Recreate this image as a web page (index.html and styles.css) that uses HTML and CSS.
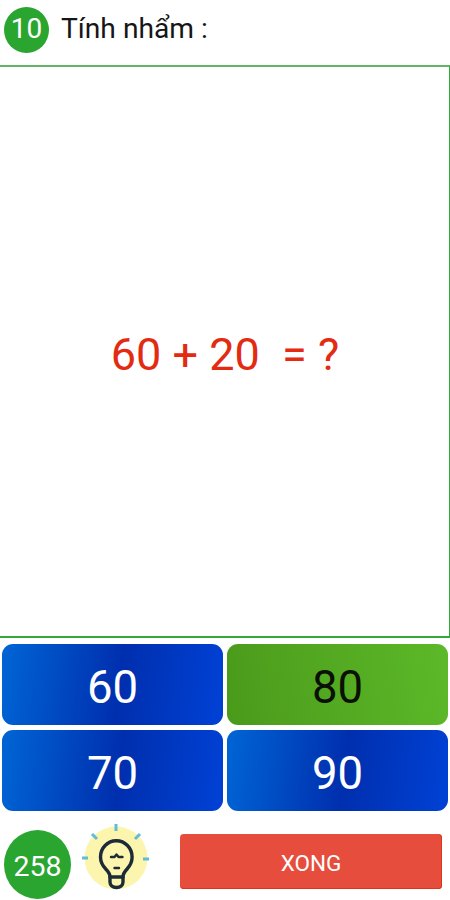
FILE: index.html
```html
<!DOCTYPE html>
<html lang="vi">
<head>
<meta charset="utf-8">
<title>Tính nhẩm</title>
<link rel="stylesheet" href="styles.css">
</head>
<body>
<main class="quiz">
  <header class="header">
    <span class="number">10</span>
    <h1 class="title">Tính nhẩm :</h1>
  </header>
  <section class="question">60 + 20&nbsp; = ?</section>
  <div class="answers">
    <button class="answer">60</button>
    <button class="answer selected">80</button>
    <button class="answer">70</button>
    <button class="answer">90</button>
  </div>
  <footer class="footer">
    <span class="score">258</span>
    <svg class="hint" viewBox="0 0 70 70" fill="none" stroke-linecap="round" stroke-linejoin="round">
      <circle cx="36" cy="38" r="31.5" fill="#fcf5ae"/>
      <g stroke="#62bbd8" stroke-width="3" stroke-linecap="butt">
        <path d="M36 4v7M12 14l5 5M60 14l-5 5M2 38h6M63 39h6"/>
      </g>
      <g stroke="#1d2b38" stroke-width="3.4">
        <path d="M30 57c0-8-9.500-8-9.500-20a15.800 16.200 0 0 1 31.600 0c0 12-9.100 12-9.100 20z"/>
        <path d="M30 57v5c0 3 2.500 5.500 6.500 5.500s6.500-2.500 6.500-5.500v-5"/>
        <path d="M31 37h3.500l2-2.500 2 2.500h4M34.500 48h4.500" stroke-width="2.400"/>
      </g>
    </svg>
    <button class="done">XONG</button>
  </footer>
</main>
</body>
</html>
```

FILE: styles.css
```css
* { box-sizing: border-box; }
body { margin: 0; background: #fff; font-family: Roboto, sans-serif; }
button { border: 0; padding: 0; font-family: inherit; }
.quiz {
  width: 450px;
  height: 900px;
  overflow: hidden;
  display: flex;
  flex-direction: column;
}
.header {
  height: 65px;
  flex: none;
  display: flex;
  align-items: flex-start;
  gap: 12px;
  padding: 7px 4px 0;
}
.number {
  width: 45px;
  height: 46px;
  border-radius: 50%;
  background: #2aa52f;
  color: #fff;
  font-size: 28px;
  line-height: 43px;
  text-align: center;
}
.title { margin: 0; font-size: 28.2px; line-height: 43px; font-weight: 400; color: #161616; }
.question {
  height: 573px;
  flex: none;
  display: flex;
  align-items: center;
  justify-content: center;
  padding: 5px 0 0 1px;
  border: solid #35a83a;
  border-width: 2px 1px 2px 0;
  border-top-color: #62b565;
  font-size: 45px;
  color: #e32b12;
}
.answers {
  display: grid;
  grid-template-columns: 221px 221px;
  grid-auto-rows: 81px;
  gap: 5px 4px;
  padding: 6px 2px 0;
}
.answer {
  border-radius: 11px;
  background: linear-gradient(97deg, #0062d3 3%, #002fae 53%, #0040d2 96%);
  color: #fff;
  font-size: 45.5px;
  line-height: 87px;
}
.selected { background: linear-gradient(80deg, #4b9a1b, #5cb928); color: #0b1005; }
.footer {
  display: flex;
  align-items: flex-start;
  padding: 9px 8px 0 4px;
}
.score {
  width: 67px;
  height: 69px;
  margin-top: 10px;
  border-radius: 50%;
  background: #2aa52f;
  color: #fff;
  font-size: 28.5px;
  line-height: 73px;
  text-align: center;
}
.hint { width: 70px; height: 70px; margin-left: 9px; }
.done {
  width: 262px;
  height: 55px;
  margin: 14px 0 0 auto;
  border-radius: 4px;
  background: #e74d3c;
  box-shadow: inset 0 -1px #dc351c, inset -1px 0 #dc351c;
  color: #fff;
  font-size: 22.5px;
  line-height: 58px;
}
```
